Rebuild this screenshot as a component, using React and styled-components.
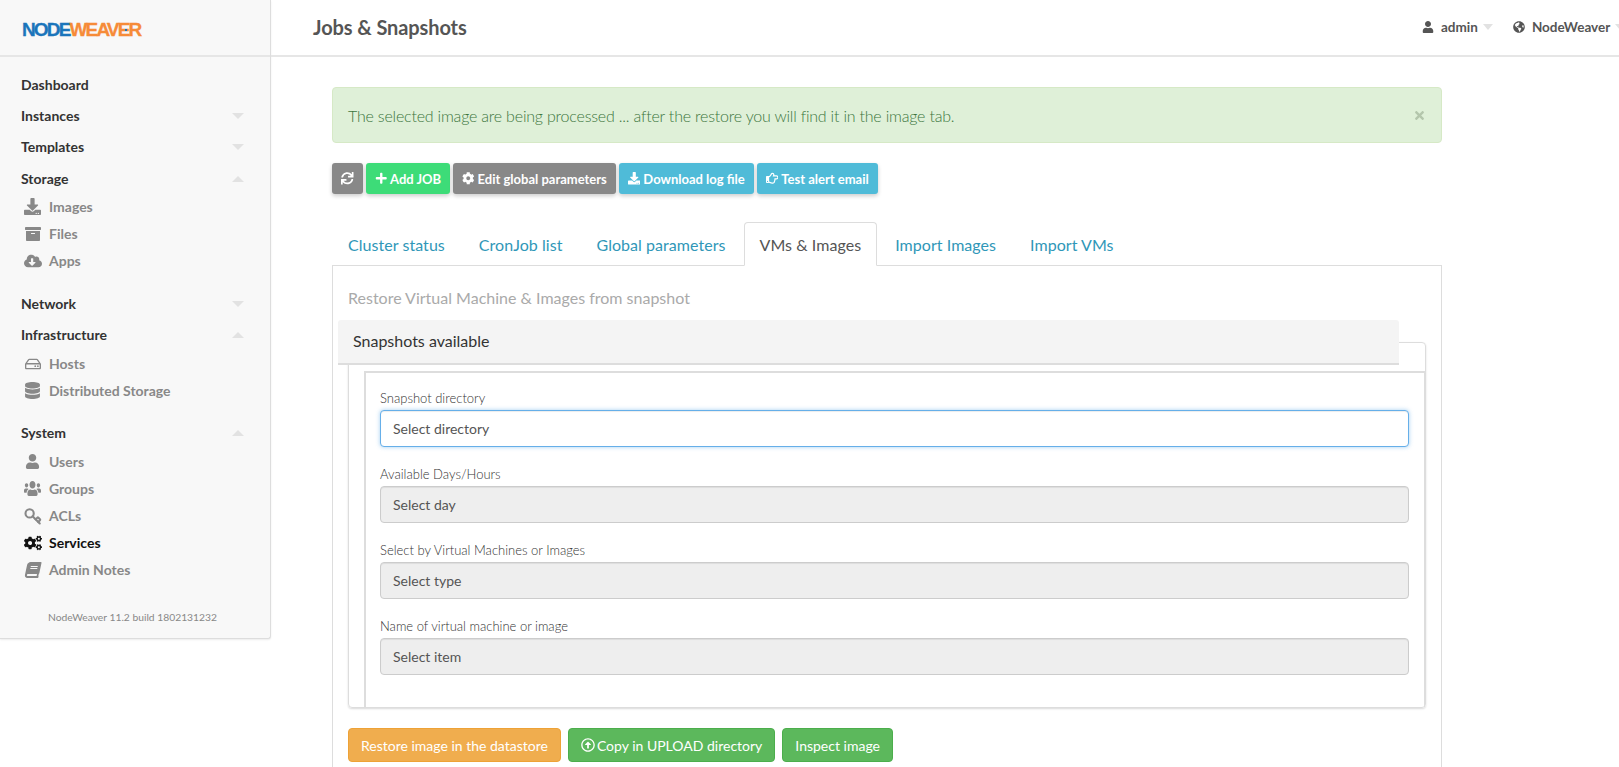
import styled, { createGlobalStyle } from "styled-components";
import { Key } from "lucide-react";
import {
  FaUser,
  FaUsers,
  FaGlobeAmericas,
  FaTimes,
  FaSync,
  FaPlus,
  FaCog,
  FaCogs,
  FaDownload,
  FaRegHandPointRight,
  FaArchive,
  FaCloudDownloadAlt,
  FaRegHdd,
  FaDatabase,
  FaBook,
  FaRegArrowAltCircleUp,
} from "react-icons/fa";

const Global = createGlobalStyle`
  html, body {
    margin: 0;
    height: 100%;
    overflow: hidden;
    background: #fff;
    font-family: Lato, "Open Sans", sans-serif;
    color: #555;
  }
  * { box-sizing: border-box; }
`;

const Page = styled.div`
  display: flex;
  align-items: flex-start;
  height: 767px;
  overflow: hidden;
`;

const Sidebar = styled.aside`
  width: 271px;
  height: 639px;
  flex: none;
  background: #f8f8f8;
  border-right: 1px solid #ddd;
  border-bottom: 1px solid #ddd;
  border-bottom-right-radius: 3px;
  box-shadow: 0 1px 2px rgba(0, 0, 0, 0.08);
`;

const LogoBar = styled.div`
  height: 57px;
  padding: 5px 0 0 22px;
  display: flex;
  align-items: center;
  border-bottom: 2px solid #e6e6e6;
`;

const Logo = styled.div`
  position: relative;
  font-family: "Liberation Sans", Arial, sans-serif;
  font-weight: 700;
  font-size: 19px;
  letter-spacing: -1.85px;
  line-height: 20px;
  color: #f68b38;
  -webkit-text-stroke: 0.3px currentColor;
  span { color: #1b75bb; }
  &::after {
    content: "";
    position: absolute;
    left: 103px;
    top: 9px;
    width: 2px;
    height: 2px;
    background: #1b75bb;
  }
`;

const Nav = styled.nav`
  padding-top: 12px;
`;

const SectionRow = styled.div`
  height: 31px;
  padding: ${(p) => (p.$nudge ? "2px" : "0")} 26px 0 21px;
  display: flex;
  align-items: center;
  justify-content: space-between;
  font-size: 14px;
  font-weight: 700;
  color: #333;
`;

const Caret = styled.i`
  width: 0;
  height: 0;
  border-left: 6px solid transparent;
  border-right: 6px solid transparent;
  ${(p) =>
    p.$up
      ? "border-bottom: 6px solid #e2e2e2;"
      : "border-top: 6px solid #e2e2e2;"}
`;

const SubList = styled.div`
  margin-bottom: ${(p) => p.$after}px;
`;

const SubRow = styled.div`
  height: 27px;
  padding-left: 22px;
  display: flex;
  align-items: center;
  font-size: 14px;
  font-weight: 700;
  color: ${(p) => (p.$active ? "#111" : "#888")};
`;

const IconSlot = styled.span`
  width: 21px;
  margin-right: 6px;
  flex: none;
  display: flex;
  align-items: center;
  justify-content: center;
  font-size: ${(p) => p.$size || 17}px;
`;

const SlantedBook = styled(FaBook)`
  transform: skewX(-12deg);
`;

const TallUsers = styled(FaUsers)`
  transform: scaleY(1.25);
`;

const KeyIcon = styled(Key)`
  transform: scaleY(-1);
  width: 18px;
  height: 18px;
  stroke-width: 2.8;
`;

const BuildInfo = styled.div`
  margin-top: 28px;
  padding-right: 5px;
  text-align: center;
  font-size: 10.3px;
  color: #888;
`;

const Main = styled.div`
  flex: 1;
  min-width: 0;
`;

const TopBar = styled.header`
  height: 57px;
  padding: 0 0 2px 42px;
  display: flex;
  align-items: center;
  justify-content: space-between;
  border-bottom: 2px solid #e6e6e6;
`;

const Title = styled.h1`
  margin: 0;
  font-size: 20px;
  font-weight: 700;
  letter-spacing: -0.1px;
  color: #555;
`;

const UserMenu = styled.div`
  display: flex;
  align-items: center;
  font-size: 13.5px;
  font-weight: 700;
  color: #555;
  width: 197px;
  flex: none;
  overflow: hidden;
  white-space: nowrap;
`;

const MenuItem = styled.div`
  display: flex;
  align-items: center;
  flex: none;
  margin-right: 20px;
  svg { font-size: 12px; flex: none; margin-right: 7px; }
  i { margin-left: 5px; border-left-width: 5px; border-right-width: 5px; }
`;

const Content = styled.main`
  padding: 30px 0 0 61px;
  width: 1171px;
`;

const Alert = styled.div`
  height: 56px;
  padding: 15px;
  display: flex;
  align-items: center;
  justify-content: space-between;
  font-size: 16px;
  font-weight: 300;
  letter-spacing: -0.2px;
  color: #3c763d;
  background: #dff0d8;
  border: 1px solid #d6e9c6;
  border-radius: 4px;
  svg { font-size: 13px; color: #b4c6ac; }
`;

const Toolbar = styled.div`
  display: flex;
  gap: 3px;
  margin-top: 20px;
`;

const ToolButton = styled.button`
  height: 31px;
  padding: 0 9px;
  display: flex;
  align-items: center;
  gap: 3px;
  border: 0;
  border-radius: 3px;
  font-family: inherit;
  font-size: 13px;
  font-weight: 700;
  color: #fff;
  background: ${(p) => p.$bg};
  box-shadow: 0 2px 4px rgba(0, 0, 0, 0.2);
  svg { font-size: 12.5px; }
`;

const Tabs = styled.div`
  display: flex;
  margin-top: 28px;
  position: relative;
  z-index: 1;
`;

const Tab = styled.div`
  height: 44px;
  padding: 10px 15px;
  margin-right: 2px;
  font-size: 16px;
  letter-spacing: 0.05px;
  line-height: 23px;
  border: 1px solid ${(p) => (p.$active ? "#ddd" : "transparent")};
  border-bottom-color: ${(p) => (p.$active ? "#fff" : "transparent")};
  border-radius: 4px 4px 0 0;
  color: ${(p) => (p.$active ? "#555" : "#3097b8")};
  background: ${(p) => (p.$active ? "#fff" : "transparent")};
`;

const TabPanel = styled.section`
  margin-top: -1px;
  height: 600px;
  padding: 20px 5px 0;
  border: 1px solid #ddd;
`;

const PanelHeading = styled.h2`
  margin: 0 0 11px 10px;
  font-size: 16px;
  font-weight: 400;
  line-height: 23px;
  color: #aaa;
`;

const LegendBar = styled.div`
  position: relative;
  z-index: 1;
  width: 1061px;
  height: 45px;
  padding: 0 0 2px 15px;
  display: flex;
  align-items: center;
  font-size: 16px;
  color: #333;
  background: #f4f4f4;
  border-bottom: 2px solid #ddd;
  border-radius: 3px 3px 0 0;
`;

const Fieldset = styled.div`
  width: 1078px;
  height: 366px;
  margin: -23px 0 0 10px;
  padding: 28px 0 0 15px;
  border: 1px solid #ddd;
  border-radius: 4px;
  box-shadow: 0 1px 2px rgba(0, 0, 0, 0.15);
`;

const FieldBox = styled.div`
  height: 336px;
  padding: 15px 15px 0 14px;
  border-top: 2px solid #ddd;
  border-left: 2px solid #ddd;
  border-right: 1px solid #ddd;
`;

const FieldGroup = styled.div`
  height: 76px;
`;

const Label = styled.label`
  display: block;
  height: 22px;
  font-size: 13px;
  font-weight: 300;
  line-height: 20px;
  color: #333;
`;

const SelectBox = styled.div`
  height: 37px;
  padding: 0 12px;
  display: flex;
  align-items: center;
  font-size: 14px;
  color: #555;
  border-radius: 4px;
  background: ${(p) => (p.$focus ? "#fff" : "#eee")};
  border: 1px solid ${(p) => (p.$focus ? "#66afe9" : "#ccc")};
  box-shadow: ${(p) =>
    p.$focus
      ? "inset 0 1px 1px rgba(0,0,0,.075), 0 0 4px rgba(102,175,233,.6)"
      : "inset 0 1px 1px rgba(0,0,0,.075)"};
`;

const Actions = styled.div`
  display: flex;
  gap: 7px;
  margin: 20px 0 0 10px;
`;

const ActionButton = styled.button`
  height: 34px;
  padding: 0 12px;
  display: flex;
  align-items: center;
  gap: 2px;
  font-family: inherit;
  font-size: 14px;
  color: #fff;
  border-radius: 4px;
  background: ${(p) => p.$bg};
  border: 1px solid ${(p) => p.$line};
`;

const sections = [
  { name: "Dashboard" },
  { name: "Instances", caret: "down" },
  { name: "Templates", caret: "down" },
  {
    name: "Storage",
    caret: "up",
    nudge: true,
    after: 14,
    items: [
      { name: "Images", icon: <FaDownload />, size: 17 },
      { name: "Files", icon: <FaArchive />, size: 16 },
      { name: "Apps", icon: <FaCloudDownloadAlt />, size: 18 },
    ],
  },
  { name: "Network", caret: "down" },
  {
    name: "Infrastructure",
    caret: "up",
    after: 13,
    items: [
      { name: "Hosts", icon: <FaRegHdd />, size: 16 },
      { name: "Distributed Storage", icon: <FaDatabase />, size: 17 },
    ],
  },
  {
    name: "System",
    caret: "up",
    items: [
      { name: "Users", icon: <FaUser />, size: 15 },
      { name: "Groups", icon: <TallUsers />, size: 17 },
      { name: "ACLs", icon: <KeyIcon /> },
      { name: "Services", icon: <FaCogs />, size: 18 },
      { name: "Admin Notes", icon: <SlantedBook />, size: 16 },
    ],
  },
];

const fields = [
  { label: "Snapshot directory", value: "Select directory", focus: true },
  { label: "Available Days/Hours", value: "Select day" },
  { label: "Select by Virtual Machines or Images", value: "Select type" },
  { label: "Name of virtual machine or image", value: "Select item" },
];

const tabs = [
  "Cluster status",
  "CronJob list",
  "Global parameters",
  "VMs & Images",
  "Import Images",
  "Import VMs",
];

export default function App() {
  return (
    <Page>
      <Global />
      <Sidebar>
        <LogoBar>
          <Logo>
            <span>NODE</span>WEAVER
          </Logo>
        </LogoBar>
        <Nav>
          {sections.map((s) => (
            <div key={s.name}>
              <SectionRow $nudge={s.nudge}>
                {s.name}
                {s.caret && <Caret $up={s.caret === "up"} />}
              </SectionRow>
              {s.items && (
                <SubList $after={s.after || 0}>
                  {s.items.map((it) => (
                    <SubRow key={it.name} $active={it.name === "Services"}>
                      <IconSlot $size={it.size}>{it.icon}</IconSlot>
                      {it.name}
                    </SubRow>
                  ))}
                </SubList>
              )}
            </div>
          ))}
        </Nav>
        <BuildInfo>NodeWeaver 11.2 build 1802131232</BuildInfo>
      </Sidebar>
      <Main>
        <TopBar>
          <Title>Jobs &amp; Snapshots</Title>
          <UserMenu>
            <MenuItem>
              <FaUser />
              admin
              <Caret />
            </MenuItem>
            <MenuItem>
              <FaGlobeAmericas />
              NodeWeaver
              <Caret />
            </MenuItem>
          </UserMenu>
        </TopBar>
        <Content>
          <Alert>
            The selected image are being processed ... after the restore you will find it in the image tab.
            <FaTimes />
          </Alert>
          <Toolbar>
            <ToolButton $bg="#888">
              <FaSync />
            </ToolButton>
            <ToolButton $bg="#3ddc78">
              <FaPlus />
              Add JOB
            </ToolButton>
            <ToolButton $bg="#888">
              <FaCog />
              Edit global parameters
            </ToolButton>
            <ToolButton $bg="#4fbbd8">
              <FaDownload />
              Download log file
            </ToolButton>
            <ToolButton $bg="#4fbbd8">
              <FaRegHandPointRight />
              Test alert email
            </ToolButton>
          </Toolbar>
          <Tabs>
            {tabs.map((t) => (
              <Tab key={t} $active={t === "VMs & Images"}>
                {t}
              </Tab>
            ))}
          </Tabs>
          <TabPanel>
            <PanelHeading>Restore Virtual Machine &amp; Images from snapshot</PanelHeading>
            <LegendBar>Snapshots available</LegendBar>
            <Fieldset>
              <FieldBox>
                {fields.map((f) => (
                  <FieldGroup key={f.label}>
                    <Label>{f.label}</Label>
                    <SelectBox $focus={f.focus}>{f.value}</SelectBox>
                  </FieldGroup>
                ))}
              </FieldBox>
            </Fieldset>
            <Actions>
              <ActionButton $bg="#f0ad4e" $line="#eea236">
                Restore image in the datastore
              </ActionButton>
              <ActionButton $bg="#5cb85c" $line="#4cae4c">
                <FaRegArrowAltCircleUp />
                Copy in UPLOAD directory
              </ActionButton>
              <ActionButton $bg="#5cb85c" $line="#4cae4c">
                Inspect image
              </ActionButton>
            </Actions>
          </TabPanel>
        </Content>
      </Main>
    </Page>
  );
}
